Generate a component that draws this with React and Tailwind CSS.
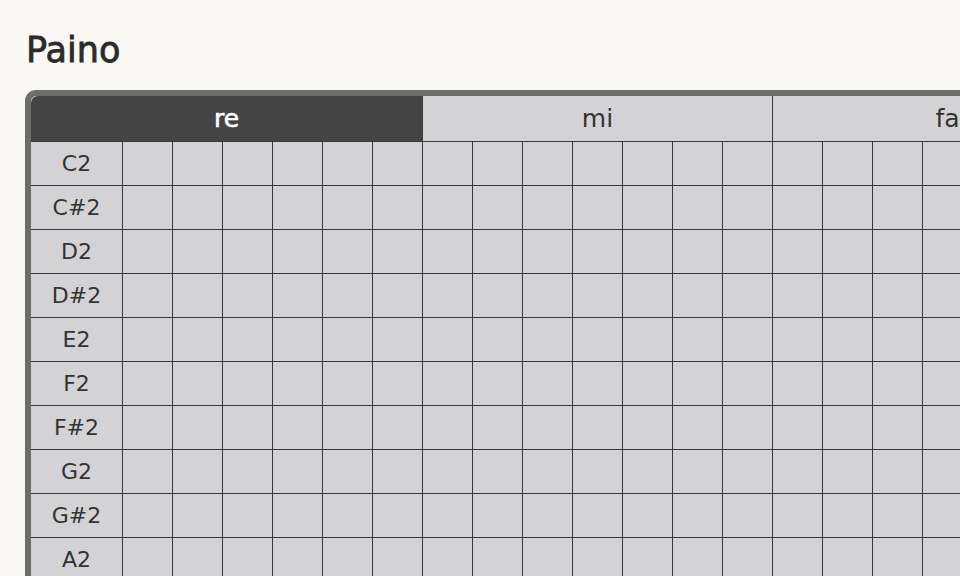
const notes = ['C2', 'C#2', 'D2', 'D#2', 'E2', 'F2', 'F#2', 'G2', 'G#2', 'A2', 'A#2'];
const groups = [
  { label: 're', width: 'w-[392px]', active: true },
  { label: 'mi', width: 'w-[350px]', active: false },
  { label: 'fa', width: 'w-[350px]', active: false },
];
const cells = Array.from({ length: 20 });

export default function App() {
  return (
    <div className="h-[576px] w-[960px] overflow-hidden bg-[#f9f8f2] font-['DejaVu_Sans',sans-serif] text-[#333]">
      <h1 className="pl-[26px] pt-[28px] text-[35px] leading-[44px] text-[#2b2b2b] [-webkit-text-stroke:0.8px_#2b2b2b]">Paino</h1>
      <div className="ml-[25px] mt-[18px] w-max rounded-tl-[11px] border-l-[6px] border-t-[6px] border-[#6d6d69] bg-[#d3d3d5]">
        <div className="flex h-[46px] border-b border-[#3a3a3a]">
          {groups.map((g) => (
            <div
              key={g.label}
              className={`${g.width} flex shrink-0 items-center justify-center border-r border-[#3a3a3a] text-[25px] ${
                g.active ? 'rounded-tl-[7px] bg-[#444] text-white [-webkit-text-stroke:0.6px_white]' : 'bg-[#d3d3d5] text-[#333]'
              }`}
            >
              {g.label}
            </div>
          ))}
        </div>
        {notes.map((n) => (
          <div key={n} className="flex h-[44px] border-b border-[#3a3a3a]">
            <div className="flex w-[92px] shrink-0 items-center justify-center border-r border-[#3a3a3a] text-[22px]">{n}</div>
            {cells.map((_, i) => (
              <div key={i} className="w-[50px] shrink-0 border-r border-[#3a3a3a]" />
            ))}
          </div>
        ))}
      </div>
    </div>
  );
}
